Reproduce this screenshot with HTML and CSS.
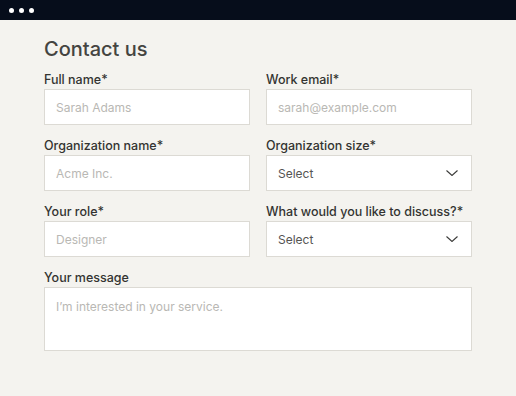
FILE: index.html
```html
<!DOCTYPE html>
<html lang="en">

<head>
    <meta charset="UTF-8">
    <meta name="viewport" content="width=device-width, initial-scale=1.0">
    <title>Contact us</title>
    <link rel="stylesheet" href="styles.css">
</head>

<body>
    <div class="top-bar">
        <span class="dot"></span>
        <span class="dot"></span>
        <span class="dot"></span>
    </div>

    <form class="contact-form">
        <h1 class="title">Contact us</h1>

        <div class="form-grid">
            <div class="field">
                <label class="field-label">Full name*</label>
                <input class="field-input" type="text" placeholder="Sarah Adams">
            </div>
            <div class="field">
                <label class="field-label">Work email*</label>
                <input class="field-input" type="email" placeholder="sarah@example.com">
            </div>
            <div class="field">
                <label class="field-label">Organization name*</label>
                <input class="field-input" type="text" placeholder="Acme Inc.">
            </div>
            <div class="field">
                <label class="field-label">Organization size*</label>
                <div class="select-box">
                    <span>Select</span>
                    <svg class="chevron" width="12" height="6" viewBox="0 0 12 6">
                        <path d="M0.5 0.5 L6 5.5 L11.5 0.5" fill="none" stroke="#3a3a38" stroke-width="1.1" />
                    </svg>
                </div>
            </div>
            <div class="field">
                <label class="field-label">Your role*</label>
                <input class="field-input" type="text" placeholder="Designer">
            </div>
            <div class="field">
                <label class="field-label">What would you like to discuss?*</label>
                <div class="select-box">
                    <span>Select</span>
                    <svg class="chevron" width="12" height="6" viewBox="0 0 12 6">
                        <path d="M0.5 0.5 L6 5.5 L11.5 0.5" fill="none" stroke="#3a3a38" stroke-width="1.1" />
                    </svg>
                </div>
            </div>
            <div class="field wide">
                <label class="field-label">Your message</label>
                <textarea class="field-input message" placeholder="I’m interested in your service."></textarea>
            </div>
        </div>
    </form>
</body>

</html>
```

FILE: styles.css
```css
* {
    box-sizing: border-box;
}

body {
    margin: 0;
    font-family: Inter, 'Noto Sans', sans-serif;
    background-color: #f4f3ef;
    color: #3b3b39;
}

.top-bar {
    height: 20px;
    background-color: #060d1b;
    display: flex;
    align-items: center;
    gap: 5px;
    padding-left: 9px;
}

.dot {
    width: 5px;
    height: 5px;
    border-radius: 50%;
    background-color: #fff;
}

.contact-form {
    padding: 17px 44px 0;
}

.title {
    margin: 0 0 11px;
    font-size: 20px;
    line-height: 24px;
    font-weight: 500;
    color: #444441;
}

.form-grid {
    display: grid;
    grid-template-columns: 206px 206px;
    column-gap: 16px;
    row-gap: 13px;
}

.field {
    display: flex;
    flex-direction: column;
}

.field.wide {
    grid-column: 1 / 3;
}

.field-label {
    font-size: 12.5px;
    line-height: 16px;
    font-weight: 500;
    color: #333331;
    margin-bottom: 1px;
}

.field-input,
.select-box {
    height: 36px;
    border: 1px solid #dcdad4;
    background-color: #fff;
    font-family: inherit;
    font-size: 12px;
    padding: 0 11px;
    color: #3b3b39;
    outline: none;
    border-radius: 0;
}

.field-input::placeholder {
    color: #b9b8b4;
}

.select-box {
    display: flex;
    align-items: center;
    justify-content: space-between;
    color: #555553;
    padding-right: 13px;
}

.message {
    height: 64px;
    padding-top: 11px;
    resize: none;
}
```
